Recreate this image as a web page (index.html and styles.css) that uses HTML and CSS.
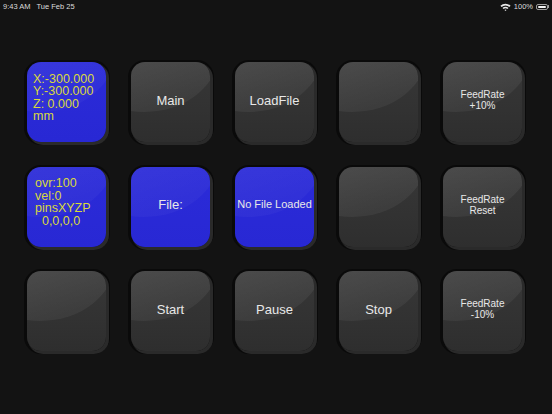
FILE: index.html
```html
<!DOCTYPE html>
<html>
<head>
<meta charset="utf-8">
<link rel="stylesheet" href="styles.css">
</head>
<body>
<div class="status">
  <div class="status-left"><span>9:43 AM</span><span>Tue Feb 25</span></div>
  <div class="status-right">
    <svg class="wifi" width="11" height="8" viewBox="0 0 11 8"><path d="M0.4 2.8 A7.2 7.2 0 0 1 10.6 2.8 L9.4 4 A5.5 5.5 0 0 0 1.6 4 Z" fill="#e8e8e8"/><path d="M2.5 4.9 A4.2 4.2 0 0 1 8.5 4.9 L7.3 6.1 A2.5 2.5 0 0 0 3.7 6.1 Z" fill="#e8e8e8"/><path d="M4.5 6.9 A1.4 1.4 0 0 1 6.5 6.9 L5.5 7.9 Z" fill="#e8e8e8"/></svg>
    <span>100%</span>
    <span class="battery"><span class="battery-fill"></span></span><span class="battery-nub"></span>
  </div>
</div>
<main class="grid">
  <div class="key"><div class="face blue"><div class="info">X:-300.000<br>Y:-300.000<br>Z: 0.000<br>mm</div></div></div>
  <div class="key"><div class="face"><span class="label">Main</span></div></div>
  <div class="key"><div class="face"><span class="label">LoadFile</span></div></div>
  <div class="key"><div class="face"></div></div>
  <div class="key"><div class="face"><span class="label small">FeedRate<br>+10%</span></div></div>

  <div class="key"><div class="face blue"><div class="info info2">ovr:100<br>vel:0<br>pinsXYZP<br>  0,0,0,0</div></div></div>
  <div class="key"><div class="face blue"><span class="label">File:</span></div></div>
  <div class="key"><div class="face blue"><span class="label mid">No File Loaded</span></div></div>
  <div class="key"><div class="face"></div></div>
  <div class="key"><div class="face"><span class="label small">FeedRate<br>Reset</span></div></div>

  <div class="key"><div class="face"></div></div>
  <div class="key"><div class="face"><span class="label">Start</span></div></div>
  <div class="key"><div class="face"><span class="label">Pause</span></div></div>
  <div class="key"><div class="face"><span class="label">Stop</span></div></div>
  <div class="key"><div class="face"><span class="label small">FeedRate<br>-10%</span></div></div>
</main>
</body>
</html>
```
FILE: styles.css
```css
html, body {
  margin: 0;
  padding: 0;
}
body {
  width: 552px;
  height: 414px;
  overflow: hidden;
  background: #131313;
  font-family: "Liberation Sans", Arial, sans-serif;
}
.status {
  height: 13px;
  display: flex;
  justify-content: space-between;
  align-items: center;
  padding: 0 3px 0 3px;
  color: #dcdcdc;
  font-size: 7.5px;
}
.status-left {
  display: flex;
  gap: 6px;
}
.status-right {
  display: flex;
  align-items: center;
  gap: 2px;
}
.wifi {
  margin-right: 1px;
}
.battery {
  width: 12px;
  height: 6px;
  border: 1px solid #9a9a9a;
  border-radius: 2px;
  padding: 1px;
  box-sizing: border-box;
  display: flex;
  margin-left: 1px;
}
.battery-fill {
  flex: 1;
  background: #f4f4f4;
  border-radius: 1px;
}
.battery-nub {
  width: 1px;
  height: 3px;
  background: #9a9a9a;
  margin-left: -2px;
}
.grid {
  display: grid;
  grid-template-columns: repeat(5, 86px);
  grid-auto-rows: 85px;
  column-gap: 18px;
  row-gap: 19.5px;
  padding: 47px 0 0 24px;
}
.key {
  box-sizing: border-box;
  width: 86px;
  height: 85px;
  border-radius: 17px;
  background: #0a0a0a;
  padding: 2px 4px 3px 3px;
}
.face {
  position: relative;
  overflow: hidden;
  width: 79px;
  height: 80px;
  border-radius: 14px;
  background: linear-gradient(180deg, #373737 0%, #323232 60%, #2e2e2e 100%);
  box-shadow: 2px 2px 0 1px #2a2a2a;
  display: flex;
  align-items: center;
  justify-content: center;
  box-sizing: border-box;
  padding-bottom: 4px;
}
.face::before {
  content: "";
  position: absolute;
  left: -62px;
  top: -70px;
  width: 150px;
  height: 120px;
  border-radius: 50%;
  background: linear-gradient(160deg, rgba(255,255,255,0.12) 40%, rgba(255,255,255,0.05) 85%);
}
.face.blue {
  background: linear-gradient(180deg, #2b2bd8 0%, #2828d4 100%);
}
.face.blue::before {
  background: linear-gradient(160deg, rgba(255,255,255,0.07) 40%, rgba(255,255,255,0.03) 85%);
}
.label {
  position: relative;
  color: #e8e8e8;
  font-size: 13px;
  text-align: center;
  line-height: 13px;
}
.label.small {
  font-size: 10px;
  line-height: 11px;
}
.label.mid {
  font-size: 11px;
  white-space: nowrap;
}
.info {
  position: relative;
  align-self: stretch;
  flex: 1;
  display: flex;
  align-items: center;
  padding-left: 6px;
  padding-bottom: 5px;
  color: #d9d93c;
  font-size: 12.5px;
  line-height: 12.5px;
  white-space: pre;
}
.info2 {
  padding-left: 8px;
}
```
